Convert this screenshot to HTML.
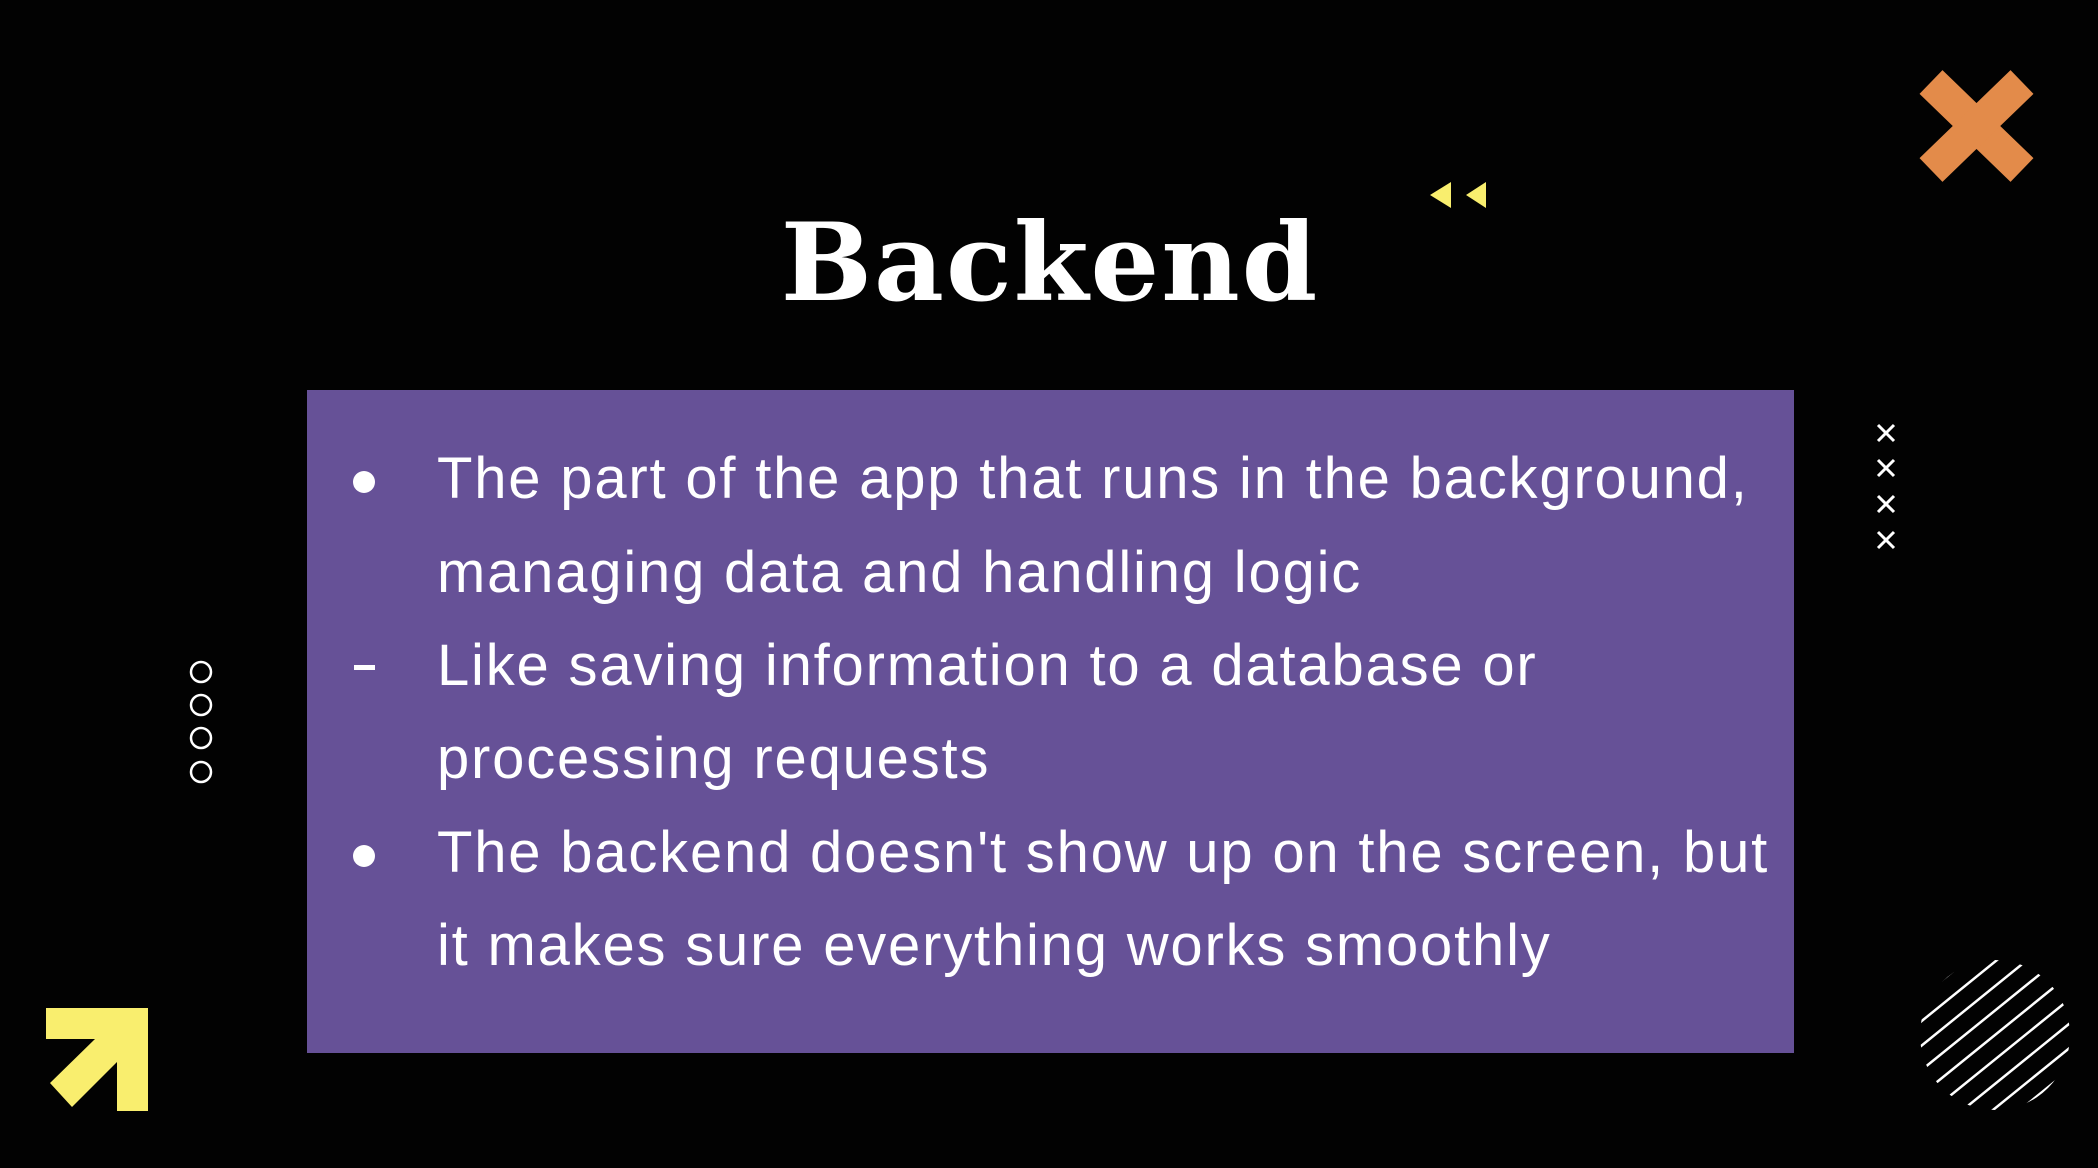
<!DOCTYPE html>
<html><head><meta charset="utf-8"><style>
html,body{margin:0;padding:0;background:#000;}
#s{position:relative;width:2098px;height:1168px;overflow:hidden;background:#020202;}
.t{position:absolute;left:0;top:0;}
h1{position:absolute;left:650px;width:800px;top:188px;margin:0;text-align:center;font-family:"DejaVu Serif","Liberation Serif",serif;font-weight:bold;font-size:108px;line-height:150px;color:#fff;letter-spacing:2px;}
#box{position:absolute;left:307px;top:390px;width:1487px;height:663px;background:#665197;}
.ln{position:absolute;left:437px;font-family:"Liberation Sans",sans-serif;font-size:58px;letter-spacing:1.8px;color:#fff;white-space:nowrap;line-height:60px;}
</style></head><body><div id="s">
<svg class="t" width="2098" height="1168">
<line x1="1931" y1="82" x2="2022" y2="170" stroke="#e38b4a" stroke-width="33"/>
<line x1="2022" y1="82" x2="1931" y2="170" stroke="#e38b4a" stroke-width="33"/>
<polygon points="1430,195 1451,182 1451,208" fill="#f9ee6e"/>
<polygon points="1466,195 1486,182 1486,208" fill="#f9ee6e"/>
<g stroke="#fff" stroke-width="3">
<path d="M1878 425l16 16M1894 425l-16 16"/><path d="M1878 460l16 16M1894 460l-16 16"/><path d="M1878 496l16 16M1894 496l-16 16"/><path d="M1878 532l16 16M1894 532l-16 16"/>
</g>
<g fill="none" stroke="#fff" stroke-width="2.5">
<circle cx="201" cy="672" r="10"/><circle cx="201" cy="705" r="10"/><circle cx="201" cy="738" r="10"/><circle cx="201" cy="772" r="10"/>
</g>
<polygon points="46,1008 148,1008 148,1111 117,1111 117,1062 72,1107 50,1083 95,1039 46,1039" fill="#f9ee6e"/>
<defs><clipPath id="c"><circle cx="1995" cy="1035" r="75"/></clipPath></defs>
<g clip-path="url(#c)" stroke="#fff" stroke-width="2.5">
<g transform="translate(1995 1035) rotate(-39)">
<line x1="-90" y1="-76" x2="90" y2="-76"/><line x1="-90" y1="-57" x2="90" y2="-57"/><line x1="-90" y1="-38" x2="90" y2="-38"/><line x1="-90" y1="-19" x2="90" y2="-19"/><line x1="-90" y1="0" x2="90" y2="0"/><line x1="-90" y1="19" x2="90" y2="19"/><line x1="-90" y1="38" x2="90" y2="38"/><line x1="-90" y1="57" x2="90" y2="57"/><line x1="-90" y1="74" x2="90" y2="74"/>
</g></g>
</svg>
<h1>Backend</h1>
<div id="box"></div>
<svg class="t" width="2098" height="1168">
<circle cx="364" cy="482" r="11" fill="#fff"/>
<rect x="354" y="665" width="21" height="5" fill="#fff"/>
<circle cx="364" cy="856" r="11" fill="#fff"/>
</svg>
<div class="ln" style="top:449px">The part of the app that runs in the background,</div>
<div class="ln" style="top:543px">managing data and handling logic</div>
<div class="ln" style="top:636px">Like saving information to a database or</div>
<div class="ln" style="top:729px">processing requests</div>
<div class="ln" style="top:823px">The backend doesn't show up on the screen, but</div>
<div class="ln" style="top:916px">it makes sure everything works smoothly</div>
</div></body></html>
